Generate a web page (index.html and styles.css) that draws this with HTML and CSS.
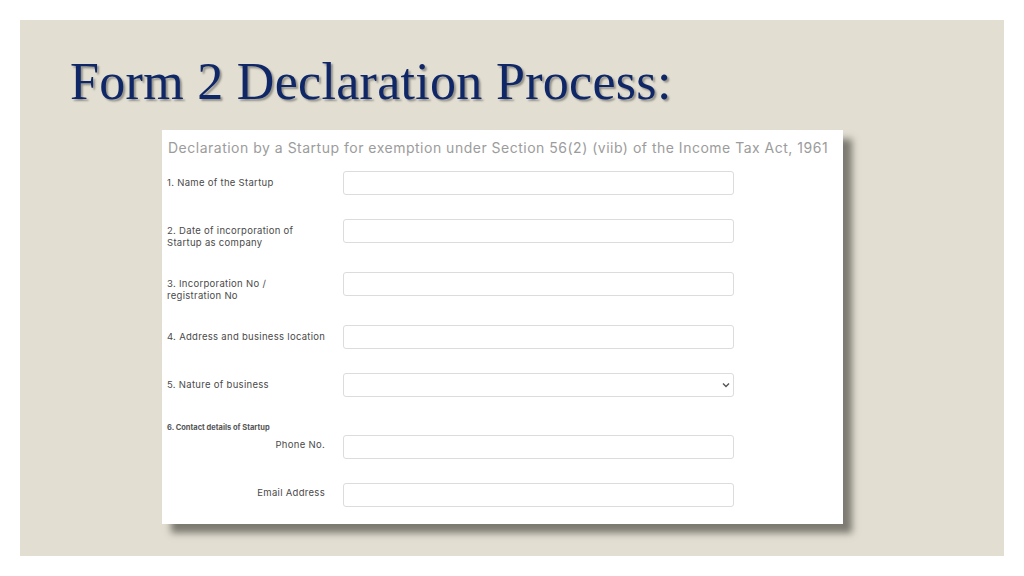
FILE: index.html
```html
<!DOCTYPE html>
<html lang="en">
<head>
<meta charset="utf-8">
<title>Form 2 Declaration Process</title>
<link rel="stylesheet" href="styles.css">
</head>
<body>
<div class="slide">
  <h1 class="title">Form 2 Declaration Process:</h1>
  <div class="card">
    <div class="card-head">Declaration by a Startup for exemption under Section 56(2) (viib) of the Income Tax Act, 1961</div>
    <div class="row">
      <div class="label">1. Name of the Startup</div>
      <div class="field"></div>
    </div>
    <div class="row">
      <div class="label">2. Date of incorporation of<br>Startup as company</div>
      <div class="field"></div>
    </div>
    <div class="row">
      <div class="label">3. Incorporation No /<br>registration No</div>
      <div class="field"></div>
    </div>
    <div class="row">
      <div class="label">4. Address and business location</div>
      <div class="field"></div>
    </div>
    <div class="row">
      <div class="label">5. Nature of business</div>
      <div class="field select">
        <svg class="chev" width="8" height="6" viewBox="0 0 8 6"><path d="M1 1.5 L4 4.5 L7 1.5" fill="none" stroke="#555" stroke-width="1.4"/></svg>
      </div>
    </div>
    <div class="subhead">6. Contact details of Startup</div>
    <div class="row row-sub">
      <div class="label label-right">Phone No.</div>
      <div class="field"></div>
    </div>
    <div class="row">
      <div class="label label-right">Email Address</div>
      <div class="field"></div>
    </div>
  </div>
</div>
</body>
</html>
```

FILE: styles.css
```css
html, body {
  margin: 0;
  padding: 0;
  background: #ffffff;
}
body {
  width: 1024px;
  height: 576px;
  overflow: hidden;
}
.slide {
  margin: 20px 0 0 20px;
  width: 984px;
  height: 536px;
  background: #e2ded2;
  box-sizing: border-box;
  padding-top: 36px;
  display: flex;
  flex-direction: column;
}
.title {
  margin: 0 0 0 50px;
  font-family: "Liberation Serif", "DejaVu Serif", serif;
  font-weight: normal;
  font-size: 52px;
  line-height: 52px;
  color: #0f2766;
  text-shadow: 2px 2px 2px rgba(0, 0, 0, 0.35);
  letter-spacing: 0.3px;
}
.card {
  margin: 22px 0 0 142px;
  width: 681px;
  height: 394px;
  box-sizing: border-box;
  background: #ffffff;
  padding: 9px 0 0 5px;
  box-shadow: 9px 9px 7px rgba(90, 88, 80, 0.75);
  display: flex;
  flex-direction: column;
  font-family: "Inter", "DejaVu Sans", sans-serif;
}
.card-head {
  font-size: 14px;
  line-height: 18px;
  color: #9c9c9c;
  white-space: nowrap;
  margin-left: 1px;
  letter-spacing: 0.5px;
}
.row {
  display: flex;
  align-items: flex-start;
  margin-top: 24px;
}
.card-head + .row {
  margin-top: 14px;
}
.label {
  width: 176px;
  flex: none;
  box-sizing: border-box;
  padding-top: 6px;
  margin-bottom: -1px;
  font-size: 9.5px;
  line-height: 12px;
  color: #4a4a4a;
  letter-spacing: 0.3px;
}
.label-right {
  text-align: right;
  padding-right: 18px;
  padding-top: 4px;
}
.field {
  width: 391px;
  height: 24px;
  box-sizing: border-box;
  border: 1px solid #dcdcdc;
  border-radius: 3px;
  background: #ffffff;
}
.select {
  display: flex;
  align-items: center;
  justify-content: flex-end;
  padding-right: 3px;
}
.chev {
  display: block;
}
.subhead {
  margin-top: 26px;
  font-size: 7.5px;
  line-height: 10px;
  font-weight: bold;
  color: #555555;
  letter-spacing: 0px;
}
.row-sub {
  margin-top: 2px;
}
```
